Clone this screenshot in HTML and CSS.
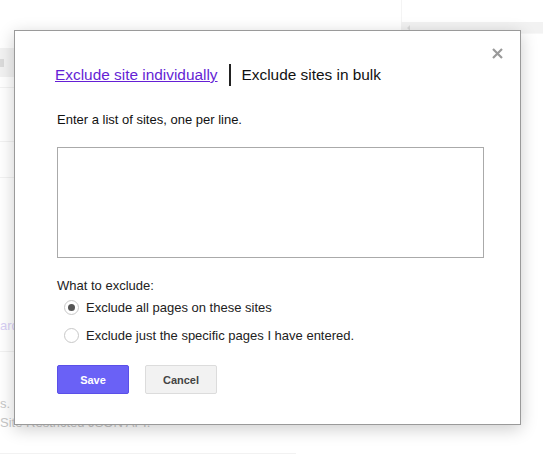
FILE: index.html
```html
<!DOCTYPE html>
<html>
<head>
<meta charset="utf-8">
<link rel="stylesheet" href="styles.css">
</head>
<body>
<div class="page">
  <div class="bg-left">
    <div class="bg-tab"><span class="bg-tab-mark"></span></div>
    <div class="bg-row r1"></div>
    <div class="bg-row r2"></div>
    <div class="bg-row r3"></div>
    <div class="bg-link">ard</div>
    <div class="bg-row r5"></div>
    <div class="bg-text t1">s.</div>
    <div class="bg-text t2">Site Restricted JSON API.</div>
    <div class="bg-row r4"></div>
  </div>
  <div class="bg-right">
    <div class="bg-top"></div>
    <div class="bg-scroll"><span class="bg-arrow"></span></div>
    <div class="bg-under"></div>
  </div>
</div>
<div class="overlay"></div>
<div class="dialog">
  <button class="close" aria-label="Close">
    <svg width="11" height="11" viewBox="0 0 11 11"><path d="M1 1L10 10M10 1L1 10" stroke="#9a9a9a" stroke-width="2.2"/></svg>
  </button>
  <div class="tabs">
    <a href="#" class="tab-link">Exclude site individually</a>
    <span class="tab-sep"></span>
    <span class="tab-current">Exclude sites in bulk</span>
  </div>
  <p class="hint">Enter a list of sites, one per line.</p>
  <textarea class="sites"></textarea>
  <p class="label">What to exclude:</p>
  <div class="options">
    <label class="option"><span class="radio checked"></span>Exclude all pages on these sites</label>
    <label class="option"><span class="radio"></span>Exclude just the specific pages I have entered.</label>
  </div>
  <div class="actions">
    <button class="btn btn-primary">Save</button>
    <button class="btn btn-secondary">Cancel</button>
  </div>
</div>
</body>
</html>
```
FILE: styles.css
```css
html, body {
  margin: 0;
  padding: 0;
  width: 543px;
  height: 462px;
  overflow: hidden;
  background: #fff;
  font-family: "Liberation Sans", Arial, sans-serif;
}

.page {
  display: flex;
  justify-content: space-between;
  height: 462px;
}

.bg-left {
  width: 300px;
  display: flex;
  flex-direction: column;
}

.bg-tab {
  margin-top: 48px;
  height: 29px;
  width: 40px;
  background: #ececec;
  display: flex;
  align-items: center;
}
.bg-tab-mark {
  width: 4px;
  height: 8px;
  background: #c8c8c8;
}
.bg-row {
  border-top: 1px solid #ececec;
}
.r1 { margin-top: 10px; }
.r2 { margin-top: 53px; }
.r3 { margin-top: 35px; }
.bg-link {
  margin-top: 140px;
  font-size: 13px;
  line-height: 16px;
  color: #c4b6f0;
}
.r5 { margin-top: 17px; }
.bg-text {
  font-size: 13px;
  line-height: 16px;
  color: #a8a8a8;
}
.t1 { margin-top: 44px; }
.t2 { margin-top: 3px; }
.r4 { margin-top: 22px; width: 296px; }

.bg-right {
  width: 142px;
  display: flex;
  flex-direction: column;
}
.bg-top {
  height: 22px;
  border-left: 1px solid #eeeeee;
}
.bg-scroll {
  height: 11px;
  background: #ececec;
  display: flex;
  align-items: center;
  padding-left: 6px;
}
.bg-under {
  border-top: 1px solid #f3f3f3;
}
.bg-arrow {
  width: 0;
  height: 0;
  border-top: 3px solid transparent;
  border-bottom: 3px solid transparent;
  border-right: 3px solid #c8c8c8;
}

.overlay {
  position: absolute;
  inset: 0;
  background: rgba(255, 255, 255, 0.35);
}

.dialog {
  position: absolute;
  left: 14px;
  top: 30px;
  width: 507px;
  height: 395px;
  box-sizing: border-box;
  border: 1px solid #9a9a9a;
  background: #fff;
  box-shadow: 0 4px 16px rgba(0, 0, 0, 0.2);
  padding: 34px 36px 0 42px;
  color: #222;
}

.close {
  position: absolute;
  right: 17px;
  top: 17px;
  border: 0;
  background: none;
  padding: 0;
  width: 11px;
  height: 11px;
  display: block;
}
.close svg { display: block; }

.tabs {
  display: flex;
  align-items: center;
  height: 20px;
  margin-left: -2px;
  font-size: 15.4px;
  line-height: 20px;
}
.tab-link {
  color: #651fd5;
  text-decoration: underline;
}
.tab-sep {
  width: 2px;
  height: 22px;
  background: #222;
  margin: 0 11px;
}
.tab-current { color: #111; }

.hint {
  margin: 27px 0 0;
  font-size: 13px;
  line-height: 16px;
  color: #111;
}

.sites {
  display: block;
  margin: 19px 0 0;
  width: 427px;
  height: 111px;
  box-sizing: border-box;
  border: 1px solid #aaaaaa;
  resize: none;
  padding: 4px;
  font-family: inherit;
}

.label {
  margin: 20px 0 0;
  font-size: 13px;
  line-height: 16px;
  color: #222;
}

.options {
  display: flex;
  flex-direction: column;
  gap: 8px;
  margin-top: 3px;
}
.option {
  display: flex;
  align-items: center;
  height: 20px;
  padding-left: 7px;
  font-size: 13px;
  color: #222;
}
.radio {
  width: 15px;
  height: 15px;
  box-sizing: border-box;
  border: 1px solid #c8c8c8;
  border-radius: 50%;
  margin-right: 7px;
  display: flex;
  align-items: center;
  justify-content: center;
  background: #fff;
}
.radio.checked::after {
  content: "";
  width: 7px;
  height: 7px;
  border-radius: 50%;
  background: #555;
}

.actions {
  display: flex;
  gap: 16px;
  margin-top: 20px;
}
.btn {
  width: 72px;
  height: 29px;
  box-sizing: border-box;
  border-radius: 2px;
  font-family: inherit;
  font-size: 11px;
  font-weight: bold;
  padding: 0;
}
.btn-primary {
  background: #6a61f6;
  border: 1px solid #5a4fe8;
  color: #fff;
}
.btn-secondary {
  background: #f2f2f2;
  border: 1px solid #dcdcdc;
  color: #444;
}
```
